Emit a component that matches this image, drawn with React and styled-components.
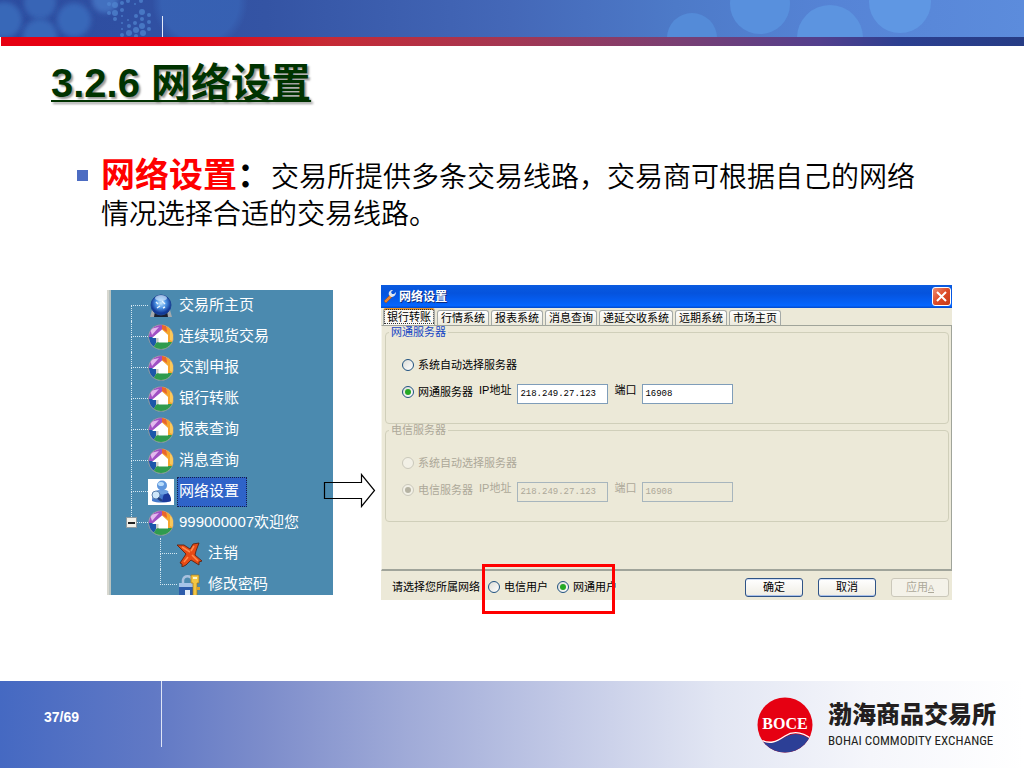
import React, { useState } from 'react';
import styled, { createGlobalStyle } from 'styled-components';

const GlobalStyle = createGlobalStyle`
  * { box-sizing: border-box; }
  body {
    margin: 0;
    background: #fff;
    font-family: "Liberation Sans", "Noto Sans CJK SC", sans-serif;
  }
`;

const Slide = styled.div`
  display: flex;
  flex-direction: column;
  min-height: 100vh;
`;

/* ---------- banner ---------- */

const Banner = styled.header`
  height: 37px;
  background: linear-gradient(90deg, #2c4c9f 0%, #2f4fa2 12%, #3454a4 26%, #4468b8 50%, #4d7ac8 66%, #5684d6 82%, #5c8cdc 100%);

  svg {
    display: block;
    width: 100%;
    height: 37px;
  }
`;

const RedBar = styled.div`
  height: 9px;
  margin-left: 1px;
  background: linear-gradient(90deg, #e60012 0%, #e60012 16%, #c62a35 32%, #a33753 50%, #7a3f73 66%, #533f8d 80%, #2c3f90 88%, #263c85 100%);
`;

const bubbles = [
  [4, 20, 18, '#3767b8'],
  [40, 3, 16, '#3765b6'],
  [74, 20, 17, '#3968b9'],
  [40, 36, 17, '#3868b8'],
  [105, 0, 13, '#4370bf'],
];

const softBubbles = [
  [692, 38, 25, '#548bd8'],
  [760, 4, 30, '#5890dd'],
  [830, 38, 33, '#5c94e0'],
  [900, 2, 31, '#5f97e3'],
];

const dots = [
  [109, 4, 2], [109, 13, 2], [115, 5, 3], [115, 13, 3], [115, 19, 2], [122, 3, 2], [122, 10, 2],
  [122, 16, 1], [128, 1, 2], [135, 4, 1], [141, 1, 2], [122, 23, 1], [128, 20, 1], [129, 26, 2],
  [135, 23, 2], [136, 30, 3], [129, 33, 3], [122, 29, 1], [122, 35, 2], [136, 36, 2], [142, 12, 3],
  [142, 19, 2], [142, 26, 3], [143, 33, 3], [149, 15, 2], [149, 22, 2], [149, 29, 2], [136, 16, 2],
];

const BannerArt = () => (
  <svg viewBox="0 0 1024 37" preserveAspectRatio="xMidYMin slice" aria-hidden="true">
    <defs>
      <filter id="soft" x="-30%" y="-30%" width="160%" height="160%">
        <feGaussianBlur stdDeviation="2.5" />
      </filter>
      <radialGradient id="haze">
        <stop offset="0.8" stopColor="#3864b6" />
        <stop offset="1" stopColor="#3864b6" stopOpacity="0" />
      </radialGradient>
    </defs>
    <circle cx="200" cy="2" r="48" fill="url(#haze)" opacity="0.8" />
    {bubbles.map(([x, y, r, fill]) => (
      <circle key={x + '-' + y} cx={x} cy={y} r={r} fill={fill} filter="url(#soft)" />
    ))}
    {softBubbles.map(([x, y, r, fill]) => (
      <circle key={x} cx={x} cy={y} r={r} fill={fill} />
    ))}
    {dots.map(([x, y, r]) => (
      <circle key={x + '-' + y} cx={x} cy={y} r={r} fill="#5188d2" opacity="0.7" />
    ))}
    <rect x="162" y="16" width="1" height="21" fill="#e4eafa" />
  </svg>
);

/* ---------- slide text ---------- */

const Content = styled.main`
  flex: 1;
  padding: 12px 72px 60px 51px;
`;

const Title = styled.h1`
  margin: 0;
  font-size: 40px;
  line-height: 50px;
  color: #003300;
  text-decoration: underline;
  text-decoration-thickness: 2px;
  text-decoration-skip-ink: none;
  text-underline-offset: 3px;
  text-shadow: 2px 2px 2px #9a9a9a;
`;

const Points = styled.ul`
  list-style: none;
  margin: 50px 16px 0 26px;
  padding: 0;
`;

const Point = styled.li`
  display: flex;
  gap: 13px;
  font-size: 28px;
  font-weight: 350;
  line-height: 37px;
  color: #000;

  &::before {
    content: '';
    flex: none;
    width: 11px;
    height: 11px;
    margin-top: 12px;
    background: #4c6cc2;
  }

  p { margin: 0; }
`;

const Term = styled.strong`
  font-size: 34px;
  line-height: 34px;
  font-weight: 700;
  color: ${(p) => (p.$mark ? '#000' : '#ff0000')};
`;

const Figures = styled.div`
  display: flex;
  align-items: flex-start;
  margin: 52px 0 0 56px;
`;

/* ---------- navigation tree ---------- */

const Tree = styled.nav`
  flex: none;
  width: 226px;
  height: 305px;
  margin-top: 5px;
  overflow: hidden;
  background: #4b8aaf;
  border-left: 2px solid #d8d8d0;
  box-shadow: inset 2px 0 0 #b9c3c0;
  color: #fff;
  font-size: 15px;

  ul {
    list-style: none;
    margin: 0;
    padding: 0 0 0 15px;
  }

  ul ul { padding-left: 29px; }
`;

const TreeRow = styled.div`
  display: flex;
  align-items: center;
  height: 31px;
`;

const Gutter = styled.span`
  display: flex;
  justify-content: flex-end;
  flex: none;
  align-items: center;
  width: 7px;
  height: 31px;
`;

const Elbow = styled.span`
  flex: none;
  width: 17px;
  height: 31px;
  display: grid;
  grid-template-rows: 16px 15px;

  &::before {
    content: '';
    border-left: ${(p) => (p.$first ? '0' : '1px dotted #d5e8f2')};
    border-bottom: 1px dotted #d5e8f2;
  }

  &::after {
    content: '';
    border-left: ${(p) => (p.$last ? '0' : '1px dotted #d5e8f2')};
  }
`;

const Toggle = styled.button`
  flex: none;
  width: 11px;
  height: 11px;
  margin-right: -6px;
  padding: 0;
  z-index: 1;
  display: grid;
  place-items: center;
  border: 1px solid #8d9aa0;
  background: #f1f0e8;

  &::before {
    content: '';
    width: 7px;
    height: 2px;
    background: #222;
  }
`;

const TreeIcon = styled.span`
  display: grid;
  place-items: center;
  flex: none;
  width: 26px;
  height: 26px;
  background: ${(p) => (p.$active ? '#fff' : 'transparent')};

  svg { display: block; }
`;

const TreeLink = styled.a`
  height: ${(p) => (p.$active ? '30px' : '24px')};
  line-height: ${(p) => (p.$active ? '26px' : '22px')};
  margin-left: ${(p) => (p.$active ? '3px' : '4px')};
  padding: ${(p) => (p.$active ? '0 7px 0 1px' : '0 1px')};
  border: ${(p) => (p.$active ? '1px dotted #14204a' : '0')};
  background: ${(p) => (p.$active ? '#2f63c8' : 'transparent')};
  color: #fff;
  text-decoration: none;
  white-space: nowrap;
`;

const HomeBall = () => (
  <svg width="26" height="26" viewBox="0 0 26 26">
    <defs>
      <radialGradient id="ball" cx="0.5" cy="0.4">
        <stop offset="0" stopColor="#c7e8ff" />
        <stop offset="0.5" stopColor="#4f96e6" />
        <stop offset="1" stopColor="#123a98" />
      </radialGradient>
    </defs>
    <path d="M4 17h18l2 7H2z" fill="#a3a9ad" />
    <path d="M7 18h12l1 6H6z" fill="#1b2130" />
    <circle cx="13" cy="12" r="10" fill="url(#ball)" stroke="#1c4596" />
    <ellipse cx="13" cy="5" rx="6" ry="3" fill="#e7f5ff" opacity="0.6" />
    <path d="M8 9l2 2M14 8l3 3M9 15l3-2M15 15l2-1" stroke="#eaf6ff" strokeWidth="1.4" />
  </svg>
);

const PhotoBall = () => (
  <svg width="26" height="26" viewBox="0 0 26 26">
    <defs>
      <clipPath id="disc"><circle cx="13" cy="13" r="12" /></clipPath>
    </defs>
    <circle cx="13" cy="13" r="12.600" fill="#c9cbc8" stroke="#6b7a84" strokeWidth="0.6" />
    <g clipPath="url(#disc)">
      <path d="M0 0h15v6L4 14H0z" fill="#a050c4" />
      <path d="M2 5l9-2-7 8z" fill="#e3b9ee" />
      <path d="M14 0h12v20h-6V11l-6-5z" fill="#f6a52c" />
      <path d="M14 0h4l1 8-5-3z" fill="#e9652f" />
      <path d="M22 6l4 2v10l-4-2z" fill="#fbc95a" />
      <path d="M0 13h8v6l-4 7H0z" fill="#1c57aa" />
      <path d="M10 18h16v8H4l4-7z" fill="#2f9b4e" />
      <path d="M14 5.500l6 5.500v7.500H10.500V14H4z" fill="#fff" />
    </g>
  </svg>
);

const NetworkIcon = () => (
  <svg width="26" height="26" viewBox="0 0 26 26">
    <path d="M4 22c0-7 4-10 9-10 6 0 10 4 10 10-5 2-14 2-19 0z" fill="#4579cc" />
    <path d="M14 23c1-6 2-10 5-10 3 2 4 5 4 9-2 1-6 1-9 1z" fill="#1c3a9c" />
    <ellipse cx="14" cy="13" rx="6.500" ry="2.500" fill="#6c9fe0" />
    <circle cx="14" cy="6.500" r="5" fill="#5e96dd" />
    <ellipse cx="13" cy="5" rx="3" ry="2" fill="#b8dcfb" />
    <circle cx="8" cy="16" r="4" fill="#cfe7fa" stroke="#5b7fac" />
    <path d="M10 19l4 3" stroke="#233f80" strokeWidth="2.200" />
  </svg>
);

const LogoutIcon = () => (
  <svg width="26" height="26" viewBox="0 0 26 26">
    <path d="M0 4l7 0 6 4 3-5 6-1-3 8-1 4 7 6-3 1 0 3-8-5-5 5-4 2 0-3-2-1 6-9-6-6z" fill="#e64a16" stroke="#5b2413" strokeWidth="0.9" />
    <path d="M5 6l8 5M17 5l-3 5M15 14l6 6M11 16l-4 5" stroke="#ff8a4c" strokeWidth="1.500" fill="none" />
  </svg>
);

const PasswordIcon = () => (
  <svg width="26" height="26" viewBox="0 0 26 26">
    <path d="M6 12V8c1-5 8-5 9 0v4" fill="none" stroke="#a9c1de" strokeWidth="2.500" />
    <path d="M2 11h16v15H2z" fill="#2d5cab" />
    <path d="M2 11h16v4H2z" fill="#a6c4e8" />
    <path d="M8 18h5v5H8z" fill="#e4edf9" />
    <path d="M14 3h8v8h-2v15h-4V11h-2z" fill="#f3c644" stroke="#a5771a" strokeWidth="0.7" />
    <path d="M16 5h4v2h-4z" fill="#fff6c9" />
    <path d="M20 15h3v3h-3z" fill="#e0a52b" />
  </svg>
);

const menu = [
  { label: '交易所主页', Icon: HomeBall },
  { label: '连续现货交易', Icon: PhotoBall },
  { label: '交割申报', Icon: PhotoBall },
  { label: '银行转账', Icon: PhotoBall },
  { label: '报表查询', Icon: PhotoBall },
  { label: '消息查询', Icon: PhotoBall },
  { label: '网络设置', Icon: NetworkIcon, active: true },
  {
    label: '999000007欢迎您',
    Icon: PhotoBall,
    children: [
      { label: '注销', Icon: LogoutIcon },
      { label: '修改密码', Icon: PasswordIcon },
    ],
  },
];

const TreeItems = ({ items, nested }) => (
  <ul>
    {items.map(({ label, Icon, active, children }, i) => (
      <li key={label}>
        <TreeRow>
          <Gutter>{children && <Toggle type="button" aria-label="收起" />}</Gutter>
          <Elbow $first={!nested && i === 0} $last={i === items.length - 1} />
          <TreeIcon $active={active}><Icon /></TreeIcon>
          <TreeLink href="#" $active={active}>{label}</TreeLink>
        </TreeRow>
        {children && <TreeItems items={children} nested />}
      </li>
    ))}
  </ul>
);

const Arrow = styled.svg`
  flex: none;
  width: 53px;
  height: 35px;
  margin: 188px 5px 0 -10px;
`;

/* ---------- settings dialog ---------- */

const Dialog = styled.section`
  flex: 1;
  min-width: 0;
  background: #ece9d8;
  color: #000;
  font-size: 11px;
  line-height: 14px;
`;

const TitleBar = styled.div`
  display: flex;
  align-items: center;
  gap: 3px;
  height: 23px;
  padding: 0 1px 0 2px;
  background: linear-gradient(180deg, #0a5be0 0%, #0553dd 35%, #0560f5 75%, #0566ff 90%, #0347c8 100%);
  color: #fff;

  h2 {
    flex: 1;
    margin: 0;
    font-size: 12px;
    line-height: 20px;
    text-shadow: 1px 1px 0 #0a2a80;
  }
`;

const CloseButton = styled.button`
  display: grid;
  place-items: center;
  width: 19px;
  height: 19px;
  padding: 0;
  border: 1px solid #fff;
  border-radius: 3px;
  background: linear-gradient(135deg, #ee8e74, #dd4a26 50%, #c53a18);
`;

const Tabs = styled.div`
  display: flex;
  align-items: flex-end;
  gap: 2px;
  height: 17px;
  padding-left: 2px;
`;

const Tab = styled.button`
  height: ${(p) => (p.$on ? '17px' : '15px')};
  padding: 0 3px;
  border: 1px solid #a5aaa8;
  border-top: ${(p) => (p.$on ? '2px solid #e8952c' : '1px solid #a5aaa8')};
  border-bottom: 0;
  border-radius: 3px 3px 0 0;
  background: ${(p) => (p.$on ? '#fbfaf5' : 'linear-gradient(180deg, #fff, #eceadc)')};
  color: #000;
  font: inherit;
  line-height: 13px;
  white-space: nowrap;
  outline: ${(p) => (p.$on ? '1px dotted #333' : 'none')};
  outline-offset: -2px;
`;

const Panel = styled.div`
  height: 246px;
  padding: 0 2px 0 3px;
  border: 1px solid #a0a49a;
  border-left-color: #f7f6ee;
  border-bottom-width: 2px;
`;

const Group = styled.fieldset`
  height: 98px;
  margin: 0;
  padding: 13px 0 0 16px;
  border: 1px solid #d0cfba;
  border-radius: 4px;
  color: ${(p) => (p.disabled ? '#aca899' : '#000')};

  legend {
    margin-left: -13px;
    padding: 0 2px;
    line-height: 12px;
    color: ${(p) => (p.disabled ? '#aca899' : '#1546c4')};
  }
`;

const FieldRow = styled.div`
  display: flex;
  align-items: center;
  height: 27px;
  gap: 6px;
`;

const RadioLabel = styled.label`
  display: inline-flex;
  align-items: center;
  gap: 4px;
  white-space: nowrap;
`;

const Radio = styled.input.attrs({ type: 'radio' })`
  appearance: none;
  display: grid;
  place-items: center;
  width: 12px;
  height: 12px;
  margin: 0;
  border: 1px solid #1f5180;
  border-radius: 50%;
  background: linear-gradient(135deg, #dcdcd6, #fff);

  &:checked::before {
    content: '';
    width: 6px;
    height: 6px;
    border-radius: 50%;
    background: #24a824;
  }

  &:disabled {
    border-color: #cac8bb;
    background: #f2f0e6;
  }

  &:disabled::before { background: #b5b2a2; }
`;

const FieldLabel = styled.label`
  height: 18px;
  white-space: nowrap;
`;

const TextInput = styled.input.attrs({ type: 'text' })`
  width: 91px;
  height: 20px;
  margin-top: 5px;
  padding: 0 2px;
  border: 1px solid #7f9db9;
  background: #fff;
  color: #000;
  font-family: "Liberation Mono", monospace;
  font-size: 9px;

  &:disabled {
    border-color: #a7b5bd;
    background: #ece9d8;
    color: #aca899;
  }
`;

const DialogFooter = styled.div`
  display: flex;
  align-items: center;
  height: 29px;
  padding: 3px 3px 0 11px;
`;

const NetworkChoice = styled.div`
  position: relative;
  display: flex;
  gap: 9px;
  margin: 0 auto 0 8px;

  /* red frame that calls out the network choice */
  &::after {
    content: '';
    position: absolute;
    inset: -16px 2px -20px -6px;
    border: 3px solid #ff0000;
    pointer-events: none;
  }
`;

const Buttons = styled.div`
  display: flex;
  gap: 15px;
`;

const PushButton = styled.button`
  width: 58px;
  height: 19px;
  padding: 0;
  border: 1px solid #2f5487;
  border-radius: 3px;
  background: linear-gradient(180deg, #fff, #efede4);
  box-shadow: inset 0 -1px 0 #a9c0ea, inset 0 1px 0 #cfdcf5;
  color: #000;
  font: inherit;

  &:disabled {
    border-color: #cbc8ba;
    background: #f4f2e9;
    box-shadow: none;
    color: #aca899;
  }

  u { font-size: 9px; }
`;

const WrenchIcon = () => (
  <svg width="13" height="15" viewBox="0 0 13 15" aria-hidden="true">
    <path d="M1 12l6-6 2 2-6 6z" fill="#e98330" stroke="#a34d16" strokeWidth="0.6" />
    <path d="M6 6c-1-3 1-5 4-5L8 3l1 2 2 0 2-2c0 3-2 5-5 5z" fill="#dde6f2" />
  </svg>
);

const ServerGroup = ({ id, name, disabled }) => (
  <Group disabled={disabled}>
    <legend>{name}</legend>
    <FieldRow>
      <RadioLabel><Radio name={id} />系统自动选择服务器</RadioLabel>
    </FieldRow>
    <FieldRow>
      <RadioLabel><Radio name={id} defaultChecked />{name}</RadioLabel>
      <FieldLabel htmlFor={id + '-ip'}>IP地址</FieldLabel>
      <TextInput id={id + '-ip'} defaultValue="218.249.27.123" />
      <FieldLabel htmlFor={id + '-port'}>端口</FieldLabel>
      <TextInput id={id + '-port'} defaultValue="16908" />
    </FieldRow>
  </Group>
);

const tabNames = ['银行转账', '行情系统', '报表系统', '消息查询', '递延交收系统', '远期系统', '市场主页'];

const SettingsDialog = () => {
  const [tab, setTab] = useState(0);
  return (
    <Dialog aria-label="网络设置">
      <TitleBar>
        <WrenchIcon />
        <h2>网络设置</h2>
        <CloseButton type="button" aria-label="关闭">
          <svg width="11" height="11" viewBox="0 0 11 11">
            <path d="M1 1l9 9M10 1l-9 9" stroke="#fff" strokeWidth="2" />
          </svg>
        </CloseButton>
      </TitleBar>
      <Tabs role="tablist">
        {tabNames.map((name, i) => (
          <Tab key={name} type="button" role="tab" aria-selected={tab === i} $on={tab === i} onClick={() => setTab(i)}>
            {name}
          </Tab>
        ))}
      </Tabs>
      <Panel>
        <ServerGroup id="cnc" name="网通服务器" />
        <ServerGroup id="telecom" name="电信服务器" disabled />
      </Panel>
      <DialogFooter>
        <span>请选择您所属网络</span>
        <NetworkChoice>
          <RadioLabel><Radio name="network" />电信用户</RadioLabel>
          <RadioLabel><Radio name="network" defaultChecked />网通用户</RadioLabel>
        </NetworkChoice>
        <Buttons>
          <PushButton type="button">确定</PushButton>
          <PushButton type="button">取消</PushButton>
          <PushButton type="button" disabled>应用<u>A</u></PushButton>
        </Buttons>
      </DialogFooter>
    </Dialog>
  );
};

/* ---------- footer ---------- */

const Footer = styled.footer`
  display: flex;
  align-items: flex-start;
  height: 87px;
  padding-right: 23px;
  background: linear-gradient(90deg, #4569c2 0%, #6179c5 15%, #7d8dcb 26%, #9ea9d7 39%, #c2c9e6 55%, #e2e6f3 70%, #f5f6fb 85%, #fff 100%);
`;

const PageNumber = styled.div`
  width: 162px;
  height: 66px;
  padding: 26px 0 0 44px;
  border-right: 1px solid #dfe5f6;
  color: #fff;
  font-size: 14px;
  line-height: 20px;
  font-weight: 700;
`;

const Brand = styled.div`
  display: flex;
  gap: 15px;
  margin: 16px 0 0 auto;
  color: #231f20;
`;

const BrandName = styled.div`
  font-size: 24px;
  line-height: 32px;
  font-weight: 900;
  padding-top: 2px;
`;

const BrandLatin = styled.div`
  width: 173px;
  font-family: "Roboto Condensed", Roboto, "Liberation Sans", sans-serif;
  font-size: 13px;
  line-height: 20px;
  white-space: nowrap;
`;

const BoceLogo = () => (
  <svg width="56" height="56" viewBox="0 0 56 56" role="img" aria-label="BOCE">
    <defs>
      <clipPath id="boce"><circle cx="28" cy="28" r="27.500" /></clipPath>
    </defs>
    <g clipPath="url(#boce)">
      <rect width="56" height="56" fill="#e60012" />
      <path d="M0 42C13 49 19 45 28 40S46 36 56 44V56H0z" fill="#2c3f96" />
      <path d="M2 42C13 48 19 45 28 39S46 35 56 43" fill="none" stroke="#fff" strokeWidth="1.300" />
    </g>
    <text x="28" y="32" textAnchor="middle" fill="#fff" fontFamily="Liberation Serif, serif" fontWeight="700" fontSize="16">BOCE</text>
  </svg>
);

const App = () => (
  <Slide>
    <GlobalStyle />
    <Banner><BannerArt /></Banner>
    <RedBar />
    <Content>
      <Title>3.2.6 网络设置</Title>
      <Points>
        <Point>
          <p>
            <Term>网络设置</Term>
            <Term $mark>：</Term>
            交易所提供多条交易线路，交易商可根据自己的网络情况选择合适的交易线路。
          </p>
        </Point>
      </Points>
      <Figures>
        <Tree aria-label="交易菜单"><TreeItems items={menu} /></Tree>
        <Arrow viewBox="0 0 53 35" aria-hidden="true">
          <path d="M1.500 9.500h37v-8l13 16-13 16v-8h-37z" fill="none" stroke="#000" strokeWidth="1.200" />
        </Arrow>
        <SettingsDialog />
      </Figures>
    </Content>
    <Footer>
      <PageNumber>37/69</PageNumber>
      <Brand>
        <BoceLogo />
        <div>
          <BrandName>渤海商品交易所</BrandName>
          <BrandLatin>BOHAI COMMODITY EXCHANGE</BrandLatin>
        </div>
      </Brand>
    </Footer>
  </Slide>
);

export default App;
